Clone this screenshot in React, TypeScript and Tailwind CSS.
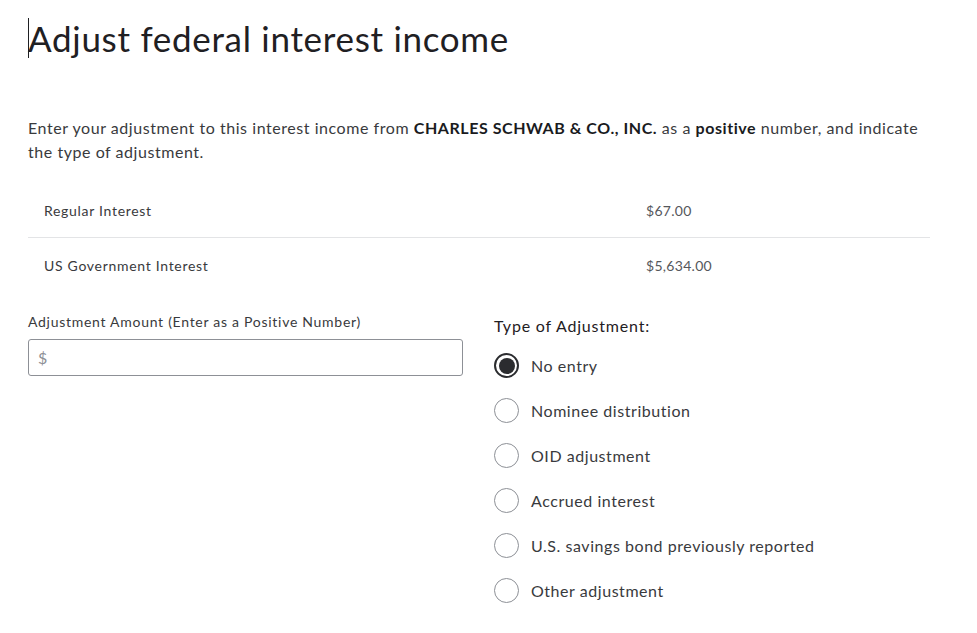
import React from "react";

const options = [
  "No entry",
  "Nominee distribution",
  "OID adjustment",
  "Accrued interest",
  "U.S. savings bond previously reported",
  "Other adjustment",
];

export default function App() {
  return (
    <div
      className="min-h-[633px] bg-white pl-[28px] pr-[46px] pt-[18px] text-[#393a3d]"
      style={{ fontFamily: "Lato, 'Noto Sans', sans-serif" }}
    >
      <h1 className="flex items-center text-[35px] leading-[40px] font-normal tracking-[0.7px] text-[#1f2023]">
        <span className="mr-[-1px] inline-block h-[40px] w-[1px] bg-[#1f2023]" />
        Adjust federal interest income
      </h1>

      <p className="mt-[58px] text-[16px] leading-[24px] tracking-[0.55px] text-[#393a3d]">
        Enter your adjustment to this interest income from{" "}
        <span className="font-bold text-[#1a1b1e]">CHARLES SCHWAB &amp; CO., INC.</span> as a{" "}
        <span className="font-bold text-[#1a1b1e]">positive</span> number, and indicate
        <br />
        the type of adjustment.
      </p>

      <div className="mt-[20px] w-[902px] text-[14px] text-[#393a3d]">
        <div className="flex h-[54px] items-center border-b border-[#e3e4e6] pl-[16px]">
          <span className="w-[602px] tracking-[0.7px]">Regular Interest</span>
          <span className="tracking-[0.3px] text-[#55575c]">$67.00</span>
        </div>
        <div className="flex h-[54px] items-center pl-[16px]">
          <span className="w-[602px] tracking-[0.7px]">US Government Interest</span>
          <span className="tracking-[0.3px] text-[#55575c]">$5,634.00</span>
        </div>
      </div>

      <div className="mt-[20px] flex gap-[31px]">
        <div className="w-[435px]">
          <div className="text-[14px] leading-[20px] tracking-[0.72px] text-[#393a3d]">
            Adjustment Amount (Enter as a Positive Number)
          </div>
          <div className="mt-[7px] flex h-[37px] items-center rounded-[3px] border border-[#8d9096] pl-[9px] text-[16px] text-[#8d9096]">
            $
          </div>
        </div>
        <div>
          <div className="mt-[3px] text-[16px] leading-[22px] tracking-[0.8px] text-[#1f2023]">
            Type of Adjustment:
          </div>
          <div className="mt-[16px] flex flex-col gap-[20px]">
            {options.map((o, i) => (
              <div key={o} className="flex h-[25px] items-center gap-[12px]">
                {i === 0 ? (
                  <span className="flex h-[25px] w-[25px] items-center justify-center rounded-full border-[2px] border-[#2b2c2f]">
                    <span className="h-[16px] w-[16px] rounded-full bg-[#2b2c2f]" />
                  </span>
                ) : (
                  <span className="h-[25px] w-[25px] rounded-full border border-[#8d9096]" />
                )}
                <span className="text-[16px] leading-[22px] tracking-[0.55px] text-[#393a3d]">{o}</span>
              </div>
            ))}
          </div>
        </div>
      </div>
    </div>
  );
}
